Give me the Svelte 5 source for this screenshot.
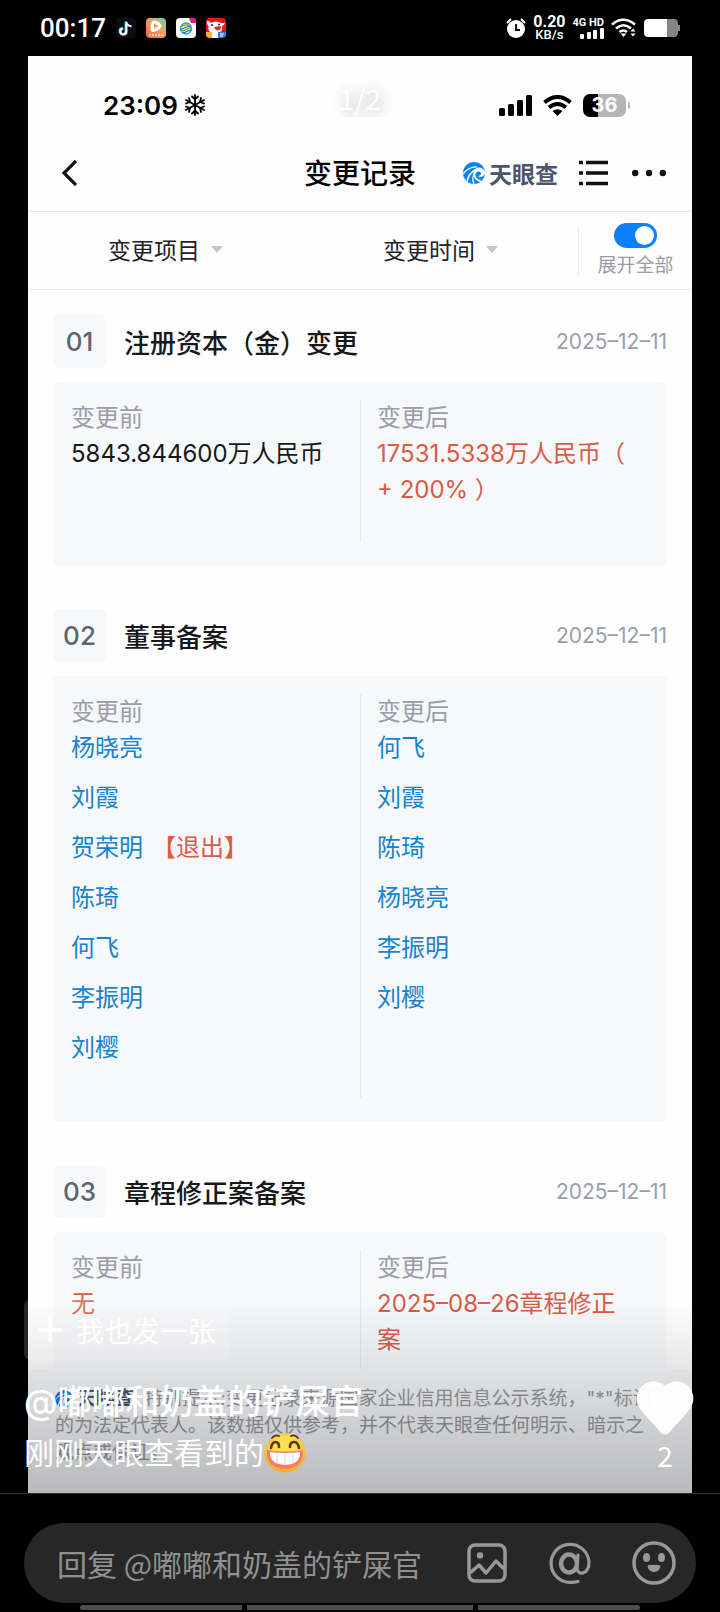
<script lang="ts">
  let expandAll = true;

  const records = [
    {
      no: '01',
      title: '注册资本（金）变更',
      date: '2025–12–11',
      before: { lines: ['5843.844600万人民币'], red: false },
      after: { lines: ['17531.5338万人民币（', '+ 200% ）'], red: true }
    },
    {
      no: '02',
      title: '董事备案',
      date: '2025–12–11',
      before: {
        people: [
          { name: '杨晓亮' },
          { name: '刘霞' },
          { name: '贺荣明', tag: '【退出】' },
          { name: '陈琦' },
          { name: '何飞' },
          { name: '李振明' },
          { name: '刘樱' }
        ]
      },
      after: {
        people: [
          { name: '何飞' },
          { name: '刘霞' },
          { name: '陈琦' },
          { name: '杨晓亮' },
          { name: '李振明' },
          { name: '刘樱' }
        ]
      }
    },
    {
      no: '03',
      title: '章程修正案备案',
      date: '2025–12–11',
      before: { lines: ['无'], red: true },
      after: { lines: ['2025–08–26章程修正', '案'], red: true }
    }
  ];
</script>

{#snippet brandMark()}
  <svg class="brand-mark" viewBox="0 0 22 22" aria-hidden="true">
    <circle cx="11" cy="11" r="11" fill="#0a84f5" />
    <path d="M0 12C4 7 9 4.500 14 5" fill="none" stroke="#fff" stroke-width="1.200" />
    <path d="M4 20C5 14 8 10 12 8" fill="none" stroke="#fff" stroke-width="1.400" />
    <path d="M11 22C9 17 10 12 14 9" fill="none" stroke="#fff" stroke-width="1.300" />
    <path d="M11 8C13 5 18 4 22 9V12C20 15 17 16 15 14C18 14 19 11 17 10C15 9 13 10 12.500 12C12 15 14 17 19 19L17 20C12 18 9 14 11 8Z" fill="#fff" />
  </svg>
{/snippet}

{#snippet column(label, side)}
  <div class="col">
    <div class="label">{label}</div>
    {#if side.people}
      <ul class="people">
        {#each side.people as p}
          <li><a href="#person">{p.name}</a>{#if p.tag}<span class="tag">{p.tag}</span>{/if}</li>
        {/each}
      </ul>
    {:else}
      {#each side.lines as line}
        <div class="value" class:red={side.red}>{line}</div>
      {/each}
    {/if}
  </div>
{/snippet}

<div class="screen">
  <header class="device-bar">
    <span class="device-time">00:17</span>
    <svg class="app" viewBox="0 0 20 20">
      <rect width="20" height="20" rx="4" fill="#0d0c18" />
      <g fill="none" stroke-width="1.800">
        <path d="M9.500 3.500V13A3 3 0 1 1 6.500 10M9.500 4C10 6.500 12 8 14.500 8" stroke="#25e8e4" />
        <path d="M11 4V14A3 3 0 1 1 7.500 11M11 5C11.500 7 13.500 8.500 16 8.500" stroke="#f5315c" />
        <path d="M10.300 3.800V13.500A3 3 0 1 1 7 10.500M10.300 4.500C11 6.500 13 8 15.200 8" stroke="#fff" />
      </g>
    </svg>
    <svg class="app" viewBox="0 0 20 20">
      <defs>
        <linearGradient id="orange" x1="0" y1="1" x2="1" y2="0">
          <stop offset="0" stop-color="#f5603a" />
          <stop offset="0.550" stop-color="#f2a05c" />
          <stop offset="1" stop-color="#4edcb2" />
        </linearGradient>
      </defs>
      <rect width="20" height="20" rx="4" fill="url(#orange)" />
      <path d="M6.500 3Q10 1.500 14.500 5.500Q17 8 13.500 11Q8 15.500 5 13Q3.500 8 6.500 3Z" fill="#fff" />
      <path d="M8 5.500L12.500 8L8 11Z" fill="#f29a4d" />
      <path d="M3 17H17" stroke="#fff" stroke-width="1.500" stroke-dasharray="2 1" opacity="0.800" />
    </svg>
    <svg class="app" viewBox="0 0 20 20">
      <rect width="20" height="20" rx="4" fill="#fff" />
      <path d="M13 0H16A4 4 0 0 1 20 4V5H15Z" fill="#e4148b" />
      <circle cx="10" cy="10.500" r="5.500" fill="none" stroke="#2a93d5" stroke-width="1.300" />
      <path d="M5 9C7 5 12 8 15 7M5 13C9 14 10 9 15 11" fill="none" stroke="#79b51c" stroke-width="1.500" />
      <path d="M5 11C8 12 9 7 15 9M7 15C11 15 11 11 15 13" fill="none" stroke="#1475c4" stroke-width="1.300" />
    </svg>
    <svg class="app" viewBox="0 0 20 20">
      <rect width="20" height="20" rx="4" fill="#e3171b" />
      <path d="M1 3Q4 3 5 5Q10 2 15 5L19 5Q18 8 16 8Q17 14 13 14H4Q1 10 3 8Q0 6 1 3Z" fill="#fff" />
      <circle cx="6" cy="7" r="1" fill="#222" />
      <circle cx="13" cy="6.500" r="1" fill="#222" />
      <path d="M8 9L15 8Q15 13 11 12.500Q9 12 8 9Z" fill="#e8282c" />
      <path d="M0 14H6V20H4A4 4 0 0 1 0 16Z" fill="#f8b51e" />
      <path d="M6 14H12V20H6Z" fill="#fff" />
      <path d="M12 14H20V16A4 4 0 0 1 16 20H12Z" fill="#3c78dd" />
      <path d="M14 16H18M14 18H17" stroke="#fff" stroke-width="1" />
    </svg>

    <div class="device-right">
      <svg width="20" height="20" viewBox="0 0 20 20">
        <circle cx="10" cy="11" r="9" fill="#fff" />
        <path d="M1 5L5 1M19 5L15 1" stroke="#fff" stroke-width="2" />
        <path d="M10 6V12H14" fill="none" stroke="#000" stroke-width="1.800" />
      </svg>
      <div class="speed"><b>0.20</b><span>KB/s</span></div>
      <div class="network">
        <span>4G HD</span>
        <svg width="24" height="11" viewBox="0 0 24 11" fill="#fff">
          <rect x="0" y="6" width="4" height="5" rx="1" />
          <rect x="7" y="4" width="4" height="7" rx="1" />
          <rect x="13" y="2" width="4" height="9" rx="1" />
          <rect x="20" y="0" width="4" height="11" rx="1" />
        </svg>
      </div>
      <svg width="26" height="20" viewBox="0 0 26 20">
        <g fill="none" stroke="#fff" stroke-width="2.600">
          <path d="M1 6.500Q12 -3 24 6.500" />
          <path d="M5 10.500Q12.500 4 20 10.500" />
          <path d="M8.500 14Q12.500 11 16 14" />
        </g>
        <path d="M9.500 15.500H15.500L12.500 19Z" fill="#fff" />
        <path d="M19.500 13.500L22 10.500L24.500 13.500ZM19.500 15.500H24.500L22 18.500Z" fill="#fff" />
      </svg>
      <svg width="36" height="18" viewBox="0 0 36 18">
        <path d="M23 0H30Q34 0 34 5V6H36V12H34V13Q34 18 30 18H23Z" fill="#858585" />
        <path d="M4 0H23V18H4Q0 18 0 14V4Q0 0 4 0Z" fill="#fff" />
      </svg>
    </div>
  </header>

  <main class="viewer">
    <div class="photo">
      <div class="phone-bar">
        <span class="phone-time">23:09</span>
        <svg width="20" height="22" viewBox="0 0 20 22" fill="none" stroke="#000" stroke-width="1.800" stroke-linecap="round">
          <path d="M10 1V21M1 6L19 16M1 16L19 6" />
          <path d="M7 2.500L10 5.500L13 2.500M7 19.500L10 16.500L13 19.500M1 9.500L5 8L4 4M19 12.500L15 14L16 18M1 12.500L5 14L4 18M19 9.500L15 8L16 4" />
        </svg>
        <div class="phone-right">
          <svg width="33" height="21" viewBox="0 0 33 21" fill="#000">
            <rect x="0" y="13" width="6" height="8" rx="1.500" />
            <rect x="9" y="9" width="6" height="12" rx="1.500" />
            <rect x="18" y="5" width="6" height="16" rx="1.500" />
            <rect x="27" y="0" width="6" height="21" rx="1.500" />
          </svg>
          <svg width="29" height="21" viewBox="0 0 29 21">
            <g fill="none" stroke="#000" stroke-width="4">
              <path d="M1.500 7.500Q14.500 -3.500 27.500 7.500" />
              <path d="M6 12.500Q14.500 5.500 23 12.500" />
            </g>
            <path d="M9.500 16Q14.500 12.500 19.500 16L14.500 21Z" fill="#000" />
          </svg>
          <div class="battery"><span>36</span></div>
        </div>
      </div>

      <nav class="nav">
        <button class="plain back" aria-label="返回">
          <svg width="16" height="26" viewBox="0 0 16 26" fill="none" stroke="#111" stroke-width="3.200">
            <path d="M15 1L3 13L15 25" />
          </svg>
        </button>
        <h1>变更记录</h1>
        <div class="nav-right">
          <span class="brand">{@render brandMark()}天眼查</span>
          <button class="plain" aria-label="目录">
            <svg width="29" height="26" viewBox="0 0 29 26" stroke="#111" stroke-width="3.400">
              <path d="M0 2.500H4M7 2.500H29M0 13H4M7 13H29M0 23.500H4M7 23.500H29" />
            </svg>
          </button>
          <button class="plain" aria-label="更多">
            <svg width="34" height="8" viewBox="0 0 34 8" fill="#111">
              <circle cx="3.200" cy="4" r="3.200" />
              <circle cx="17" cy="4" r="3.200" />
              <circle cx="30.800" cy="4" r="3.200" />
            </svg>
          </button>
        </div>
      </nav>

      <div class="filters">
        <button class="plain filter">变更项目<i class="caret"></i></button>
        <button class="plain filter">变更时间<i class="caret"></i></button>
        <label class="expand">
          <input type="checkbox" bind:checked={expandAll} />
          <span>展开全部</span>
        </label>
      </div>

      <div class="records">
        {#each records as r}
          <section class="record">
            <div class="head">
              <span class="no">{r.no}</span>
              <h2>{r.title}</h2>
              <time>{r.date}</time>
            </div>
            <div class="card">
              {@render column('变更前', r.before)}
              {@render column('变更后', r.after)}
            </div>
          </section>
        {/each}
      </div>

      <div class="notice">
        <p><span class="brand small">{@render brandMark()}天眼查</span>特别提示:变更记录来源国家企业信用信息公示系统，"*"标识</p>
        <p>的为法定代表人。该数据仅供参考，并不代表天眼查任何明示、暗示之</p>
        <p>观点或保证。</p>
      </div>
    </div>

    <div class="counter">1/2</div>

    <div class="overlay">
      <div class="post">
        <button class="plain again">
          <svg width="24" height="24" viewBox="0 0 24 24" stroke="#fff" stroke-width="4" stroke-linecap="round">
            <path d="M12 2V22M2 12H22" />
          </svg>
          我也发一张
        </button>
        <div class="author">@嘟嘟和奶盖的铲屎官</div>
        <div class="caption">
          刚刚天眼查看到的<svg width="42" height="40" viewBox="0 0 42 40" aria-label="呲牙">
            <defs>
              <radialGradient id="face" cx="0.500" cy="0.400" r="0.600">
                <stop offset="0.500" stop-color="#ffe04e" />
                <stop offset="1" stop-color="#f9a825" />
              </radialGradient>
            </defs>
            <ellipse cx="21" cy="20" rx="20.500" ry="19.500" fill="url(#face)" />
            <path d="M8 5Q11 1 15 3M27 3Q31 1 34 5" fill="none" stroke="#5c3210" stroke-width="1.800" stroke-linecap="round" />
            <path d="M7 15Q8 9 11.500 9Q15 9 15 14M26 14Q26 9 30 9Q34 9 35 15" fill="none" stroke="#5c3210" stroke-width="2.600" stroke-linecap="round" />
            <path d="M3 17Q21 20 39 17Q40 35 21 36Q2 35 3 17Z" fill="#f27c66" />
            <path d="M6 19Q21 21 36 19Q37 31 21 32Q5 31 6 19Z" fill="#fff" />
            <path d="M13 20V31M21 20V32M29 20V31" stroke="#dcd3cf" stroke-width="1" />
          </svg>
        </div>
      </div>
      <button class="plain like" aria-label="点赞">
        <svg width="58" height="54" viewBox="0 0 58 54">
          <path d="M29 5C35 -1 46 -1 52 5C59 12 59 22 53 29C47 37 41 42 33 52Q29 55 25 52C17 42 11 37 5 29C-1 22 -1 12 6 5C12 -1 23 -1 29 5Z" fill="#fff" opacity="0.950" />
        </svg>
        <span>2</span>
      </button>
    </div>
  </main>

  <footer class="reply">
    <div class="reply-box">
      <input type="text" aria-label="回复" placeholder="回复 @嘟嘟和奶盖的铲屎官" />
      <button class="plain" aria-label="图片">
        <svg width="42" height="42" viewBox="0 0 42 42" fill="none" stroke="#989898" stroke-width="3.500" stroke-linejoin="round">
          <rect x="3" y="3" width="36" height="36" rx="6" />
          <circle cx="14" cy="13.500" r="3.200" fill="#989898" stroke="none" />
          <path d="M4 31L13 23L20 31L30 19L38 27" />
        </svg>
      </button>
      <button class="plain" aria-label="提到">
        <svg width="42" height="42" viewBox="0 0 42 42" fill="none" stroke="#989898" stroke-width="3.200" stroke-linecap="round">
          <ellipse cx="20" cy="21.500" rx="8" ry="9" stroke-width="4.500" />
          <path d="M29 13L28 26C28 34 40 33 40 20A19 19 0 1 0 21 40.400Q26 40.400 29 39.500" />
        </svg>
      </button>
      <button class="plain" aria-label="表情">
        <svg width="44" height="44" viewBox="0 0 44 44">
          <circle cx="22" cy="22" r="20" fill="none" stroke="#989898" stroke-width="3.500" />
          <ellipse cx="14.500" cy="16.500" rx="3.500" ry="4.500" fill="#989898" />
          <ellipse cx="29.500" cy="16.500" rx="3.500" ry="4.500" fill="#989898" />
          <path d="M17 24H27Q29 24 28 27Q26 31 22 31Q18 31 16 27Q15 24 17 24Z" fill="#989898" />
        </svg>
      </button>
    </div>
    <div class="pages"><i></i><i></i><i></i></div>
  </footer>
</div>

<style>
  :global(body) {
    background: #000;
  }
  .screen {
    font-family: Inter, "Noto Sans CJK SC", sans-serif;
    background: #000;
    color: #17181c;
  }
  svg {
    display: block;
    flex: none;
  }
  .plain {
    border: 0;
    padding: 0;
    background: none;
    color: inherit;
    font: inherit;
    display: flex;
    align-items: center;
  }

  /* device status bar */
  .device-bar {
    height: 56px;
    box-sizing: border-box;
    padding: 0 40px;
    display: flex;
    align-items: center;
    gap: 10px;
    color: #fff;
  }
  .device-time {
    font-family: Roboto, sans-serif;
    font-size: 26px;
    font-weight: 500;
  }
  .app {
    width: 20px;
    height: 20px;
  }
  .device-right {
    margin-left: auto;
    display: flex;
    align-items: center;
    gap: 7px;
    font-family: Roboto, sans-serif;
  }
  .speed {
    display: flex;
    flex-direction: column;
    align-items: center;
    font-size: 13px;
    font-weight: 500;
    line-height: 12px;
  }
  .speed b {
    font-size: 16px;
    line-height: 14px;
  }
  .network {
    display: flex;
    flex-direction: column;
    align-items: flex-end;
    font-size: 11px;
    font-weight: 700;
    line-height: 11px;
  }

  /* picture being viewed */
  .viewer {
    position: relative;
    border-bottom: 1px solid #333;
  }
  .photo {
    margin: 0 28px;
    background: #fefefe;
  }
  .phone-bar {
    height: 79px;
    box-sizing: border-box;
    padding: 19px 62px 0 75px;
    display: flex;
    align-items: center;
    gap: 7px;
    color: #000;
  }
  .phone-time {
    font-size: 26px;
    font-weight: 600;
  }
  .phone-right {
    margin-left: auto;
    display: flex;
    align-items: center;
    gap: 11px;
  }
  .battery {
    width: 43px;
    height: 23px;
    margin-right: 4px;
    border-radius: 7px;
    background: linear-gradient(to right, #000 36%, #b5b5b5 36%);
    color: #fff;
    font-size: 20px;
    font-weight: 700;
    line-height: 23px;
    text-align: center;
    position: relative;
  }
  .battery::after {
    content: "";
    position: absolute;
    right: -4px;
    top: 8px;
    width: 2px;
    height: 7px;
    border-radius: 0 2px 2px 0;
    background: #b5b5b5;
  }
  .counter {
    position: absolute;
    top: 16px;
    left: 0;
    right: 0;
    padding-top: 8px;
    clip-path: inset(0);
    color: #fff;
    font-family: "Noto Sans CJK SC", sans-serif;
    font-size: 28px;
    line-height: 37px;
    text-align: center;
    text-shadow: 2px 2px 14px rgba(0, 0, 0, 0.4);
  }

  .nav {
    height: 76px;
    padding: 0 26px;
    display: grid;
    grid-template-columns: 1fr auto 1fr;
    align-items: center;
    border-bottom: 1px solid #e4e4e6;
  }
  .back {
    padding-left: 7px;
  }
  h1 {
    margin: 0;
    padding-bottom: 2px;
    color: #000;
    font-size: 28px;
    font-weight: 500;
  }
  .nav-right {
    display: flex;
    align-items: center;
    justify-content: flex-end;
    gap: 24px;
  }
  .brand {
    display: flex;
    align-items: center;
    gap: 4px;
    margin-right: -3px;
    color: #4b556c;
    font-size: 23px;
    font-weight: 700;
  }
  .brand-mark {
    width: 22px;
    height: 22px;
  }

  .filters {
    height: 77px;
    display: flex;
    align-items: center;
    border-bottom: 1px solid #e8e8ea;
  }
  .filter {
    flex: 1;
    padding-bottom: 3px;
    justify-content: center;
    gap: 11px;
    color: #222327;
    font-size: 23px;
  }
  .caret {
    border: 6px solid transparent;
    border-top: 7px solid #c4c5ce;
    border-bottom: 0;
  }
  .expand {
    width: 113px;
    height: 49px;
    border-left: 1px solid #ececf0;
    display: flex;
    flex-direction: column;
    align-items: center;
    justify-content: center;
    gap: 5px;
    color: #9a9ca6;
    font-size: 19px;
    line-height: 26px;
  }
  .expand input {
    appearance: none;
    flex: none;
    width: 43px;
    height: 25px;
    margin: 0;
    padding: 3px;
    box-sizing: border-box;
    border-radius: 13px;
    background: #c8cad0;
    display: flex;
  }
  .expand input:checked {
    background: #0a80fb;
    justify-content: flex-end;
  }
  .expand input::before {
    content: "";
    width: 19px;
    height: 19px;
    border-radius: 50%;
    background: #fff;
  }

  /* change records */
  .records {
    padding: 25px 25px 0;
    display: flex;
    flex-direction: column;
    gap: 44px;
  }
  .head {
    display: flex;
    align-items: center;
    margin-bottom: 14px;
  }
  .no {
    width: 53px;
    height: 53px;
    margin-right: 18px;
    border-radius: 6px;
    background: #f7f8fa;
    color: #5f6475;
    font-size: 26px;
    font-weight: 500;
    line-height: 53px;
    text-align: center;
  }
  h2 {
    margin: 0;
    font-size: 26px;
    font-weight: 500;
  }
  time {
    margin-left: auto;
    color: #9b9eaa;
    font-size: 21px;
  }
  .card {
    padding: 18px 0 23px;
    border-radius: 6px;
    background: #f7f8fa;
    display: grid;
    grid-template-columns: 1fr 1fr;
    font-size: 24px;
    line-height: 36px;
  }
  .col {
    min-height: 142px;
    box-sizing: border-box;
    padding: 0 18px;
  }
  .col + .col {
    border-left: 1px solid #e6e7ea;
    padding: 0 0 0 16px;
  }
  .record:last-child .card {
    padding-bottom: 0;
    border-radius: 6px 6px 0 0;
  }
  .record:last-child .col {
    min-height: 119px;
  }
  .label {
    color: #9a9daa;
  }
  .value {
    white-space: nowrap;
  }
  .red,
  .tag {
    color: #d95b48;
  }
  .tag {
    margin-left: 9px;
  }
  .people {
    margin: 0;
    padding: 0 0 18px;
    list-style: none;
  }
  .people li {
    padding-bottom: 14px;
  }
  .people a {
    color: #1583cf;
    text-decoration: none;
  }

  .notice {
    padding: 16px 0 27px 27px;
    background: #f7f8fa;
    color: #969aa5;
    font-size: 19px;
    line-height: 27px;
    white-space: nowrap;
  }
  .notice p {
    height: 27px;
    margin: 0;
    display: flex;
    align-items: center;
  }
  .brand.small {
    margin-right: 10px;
    font-size: 19px;
  }
  .small .brand-mark {
    width: 18px;
  }

  /* post info over the picture */
  .overlay {
    position: absolute;
    left: 0;
    right: 0;
    bottom: 0;
    padding: 0 26px 18px 24px;
    display: flex;
    justify-content: space-between;
    align-items: flex-end;
    background: linear-gradient(to bottom, transparent, rgba(0, 0, 0, 0.25));
    color: #fff;
  }
  .again {
    height: 61px;
    margin-bottom: 20px;
    padding: 0 13px 0 14px;
    gap: 14px;
    border-radius: 7px;
    background: rgba(255, 255, 255, 0.15);
    font-size: 28px;
  }
  .author {
    font-size: 34px;
    font-weight: 500;
    line-height: 44px;
    margin-bottom: 7px;
  }
  .caption {
    display: flex;
    align-items: center;
    font-size: 30px;
    line-height: 44px;
  }
  .like {
    flex-direction: column;
    font-family: "Noto Sans CJK SC", sans-serif;
    font-size: 28px;
    line-height: 40px;
  }

  .reply {
    padding-top: 29px;
  }
  .reply-box {
    height: 80px;
    margin: 0 24px;
    padding: 0 20px 0 33px;
    box-sizing: border-box;
    border-radius: 40px;
    background: #272727;
    display: flex;
    align-items: center;
    gap: 41px;
  }
  .reply-box input {
    flex: 1;
    min-width: 0;
    padding: 0;
    border: 0;
    outline: 0;
    background: none;
    color: #ddd;
    font-family: "Noto Sans CJK SC", sans-serif;
    font-size: 30px;
  }
  .reply-box input::placeholder {
    color: #909090;
    opacity: 1;
  }
  .pages {
    padding: 2px 80px;
    display: grid;
    grid-template-columns: 5fr 7fr 5fr;
    gap: 5px;
  }
  .pages i {
    height: 5px;
    background: #4d4d4d;
  }
  .pages i:first-child {
    border-radius: 3px 0 0 3px;
  }
  .pages i:last-child {
    border-radius: 0 3px 3px 0;
  }
</style>
